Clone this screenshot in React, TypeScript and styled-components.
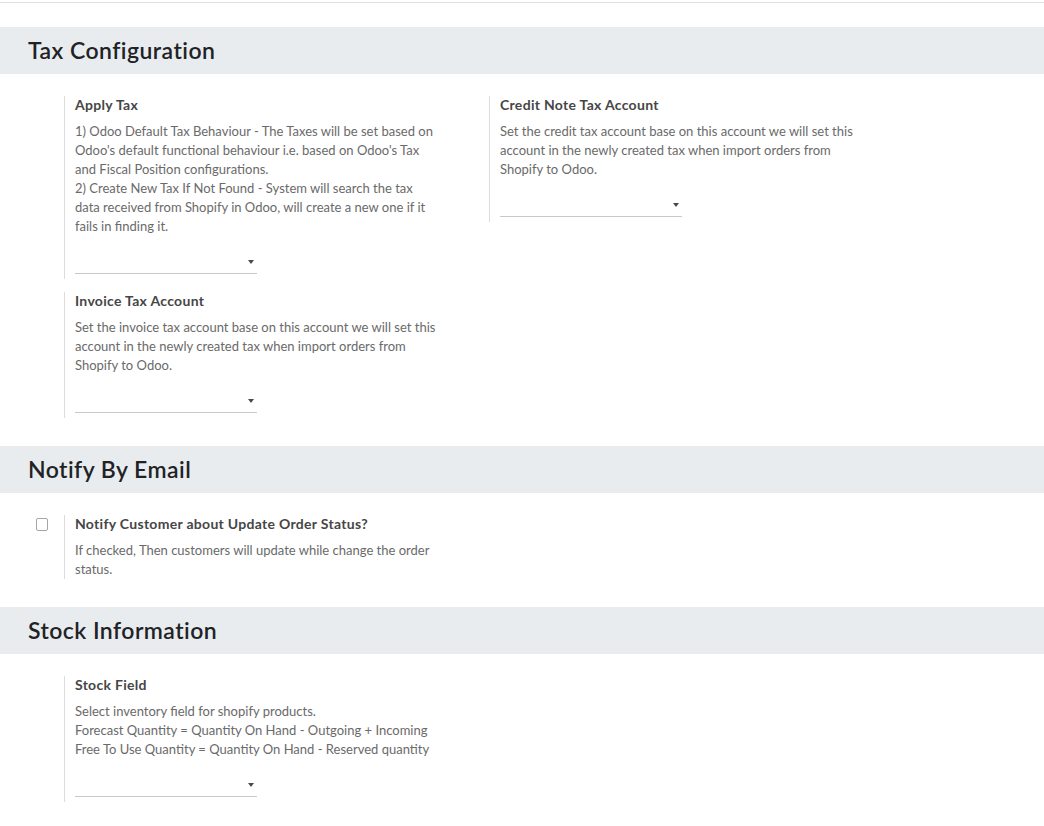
import React from "react";
import styled, { createGlobalStyle } from "styled-components";

const GlobalStyle = createGlobalStyle`
  html, body {
    margin: 0;
    padding: 0;
    background: #ffffff;
    font-family: "Lato", "Noto Sans", sans-serif;
  }
  * { box-sizing: border-box; }
`;

const Page = styled.div`
  width: 1044px;
  padding-top: 2px;
`;

const TopRule = styled.div`
  height: 1px;
  background: #e1dee6;
  margin-bottom: 24px;
`;

const SectionHeader = styled.h2`
  margin: 0;
  height: 47px;
  background: #e9ecef;
  display: flex;
  align-items: center;
  padding: 0 0 1px 28px;
  font-size: 23px;
  font-weight: 600;
  color: #1f2326;
  letter-spacing: 0.45px;
`;

const SectionBody = styled.div`
  display: grid;
  grid-template-columns: 425px 425px;
  row-gap: 13px;
  padding: 22px 0 28px 16px;
  align-items: start;
`;

const SettingBox = styled.div`
  display: flex;
`;

const LeftPane = styled.div`
  width: 48px;
  flex: none;
  padding: 3px 0 0 20px;
`;

const RightPane = styled.div<{ $pad?: number }>`
  flex: 1;
  border-left: 1px solid #dcdcdc;
  padding-left: 10px;
  padding-bottom: ${(p) => p.$pad ?? 0}px;
`;

const Label = styled.div`
  font-size: 14px;
  line-height: 18px;
  font-weight: 700;
  letter-spacing: 0.3px;
  color: #464646;
  margin-bottom: 8px;
`;

const Description = styled.div`
  font-size: 13px;
  line-height: 19px;
  color: #6a6a6a;
`;

const SelectBox = styled.div`
  margin-top: 14px;
  width: 182px;
  height: 24px;
  border-bottom: 1px solid #c9c9c9;
  display: flex;
  align-items: center;
  justify-content: flex-end;
  padding-right: 2px;
`;

const Caret = styled.span`
  width: 0;
  height: 0;
  border-left: 3px solid transparent;
  border-right: 3px solid transparent;
  border-top: 4px solid #4a4a4a;
  margin-right: 1px;
`;

const CheckBox = styled.span`
  display: block;
  width: 12px;
  height: 13px;
  border: 1px solid #a6a6a6;
  border-radius: 2px;
  background: #fff;
`;

type SettingProps = {
  label: string;
  lines: string[];
  select?: boolean;
  checkbox?: boolean;
};

const Setting = ({ label, lines, select, checkbox }: SettingProps) => (
  <SettingBox>
    <LeftPane>{checkbox && <CheckBox />}</LeftPane>
    <RightPane $pad={select ? 5 : 0}>
      <Label>{label}</Label>
      <Description>
        {lines.map((l, i) => (
          <div key={i}>{l}</div>
        ))}
      </Description>
      {select && (
        <SelectBox>
          <Caret />
        </SelectBox>
      )}
    </RightPane>
  </SettingBox>
);

export default function App() {
  return (
    <>
      <GlobalStyle />
      <Page>
        <TopRule />
        <SectionHeader>Tax Configuration</SectionHeader>
        <SectionBody>
          <Setting
            label="Apply Tax"
            select
            lines={[
              "1) Odoo Default Tax Behaviour - The Taxes will be set based on",
              "Odoo's default functional behaviour i.e. based on Odoo's Tax",
              "and Fiscal Position configurations.",
              "2) Create New Tax If Not Found - System will search the tax",
              "data received from Shopify in Odoo, will create a new one if it",
              "fails in finding it.",
            ]}
          />
          <Setting
            label="Credit Note Tax Account"
            select
            lines={[
              "Set the credit tax account base on this account we will set this",
              "account in the newly created tax when import orders from",
              "Shopify to Odoo.",
            ]}
          />
          <Setting
            label="Invoice Tax Account"
            select
            lines={[
              "Set the invoice tax account base on this account we will set this",
              "account in the newly created tax when import orders from",
              "Shopify to Odoo.",
            ]}
          />
        </SectionBody>
        <SectionHeader>Notify By Email</SectionHeader>
        <SectionBody>
          <Setting
            label="Notify Customer about Update Order Status?"
            checkbox
            lines={[
              "If checked, Then customers will update while change the order",
              "status.",
            ]}
          />
        </SectionBody>
        <SectionHeader>Stock Information</SectionHeader>
        <SectionBody>
          <Setting
            label="Stock Field"
            select
            lines={[
              "Select inventory field for shopify products.",
              "Forecast Quantity = Quantity On Hand - Outgoing + Incoming",
              "Free To Use Quantity = Quantity On Hand - Reserved quantity",
            ]}
          />
        </SectionBody>
      </Page>
    </>
  );
}
